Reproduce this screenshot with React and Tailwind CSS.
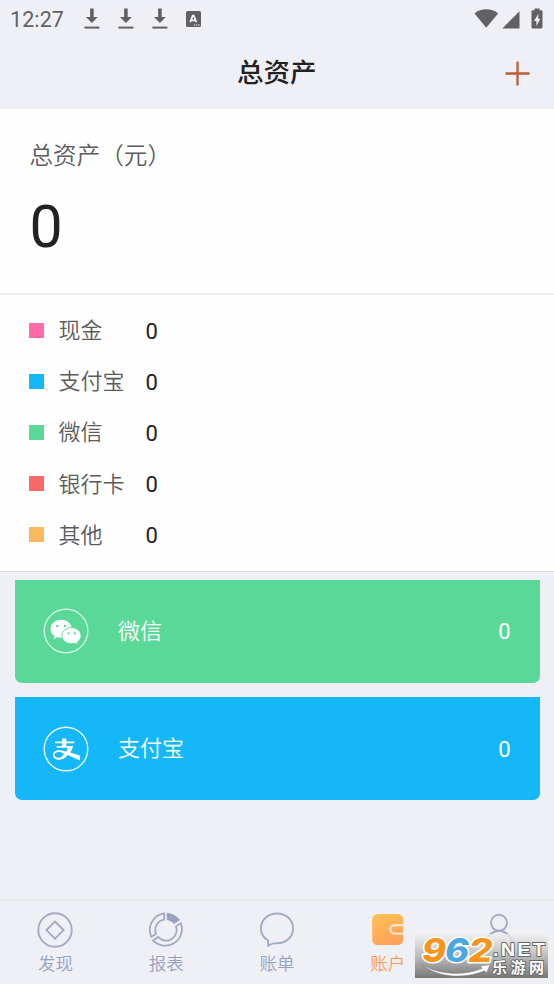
import React from 'react'

const summary = [
  { name: '现金', value: 0, color: 'bg-[#ff6ba8]' },
  { name: '支付宝', value: 0, color: 'bg-[#14b7f8]' },
  { name: '微信', value: 0, color: 'bg-[#5ad898]' },
  { name: '银行卡', value: 0, color: 'bg-[#fb686a]' },
  { name: '其他', value: 0, color: 'bg-[#fab95c]' },
]

const DownloadIcon = () => (
  <svg width="16" height="22" viewBox="0 0 16 22" fill="#616163">
    <path d="M6.1 0.5h3.6v8.5h4.1L7.9 15 2 9h4.1z" />
    <path d="M0.4 18.6h15v2H0.4z" />
  </svg>
)

const KeyboardIcon = () => (
  <svg width="15" height="16" viewBox="0 0 15 16">
    <rect width="15" height="16" rx="1.6" fill="#616163" />
    <path d="M4.2 11.3 6.7 4.6h1.1l2.5 6.7M5.2 9.3h4.1" fill="none" stroke="#f2f3f6" strokeWidth="1.8" />
    <path d="M7.8 13.4h1.4v1.2H7.8zM10 13.4h1.4v1.2H10zM12.2 13.4h1.4v1.2h-1.4z" fill="#f2f3f6" />
  </svg>
)

const StatusBar = () => (
  <div className="flex h-[37px] items-center px-[10px]">
    <span className="w-[74px] pt-[2px] text-[21.5px] tracking-[0.1px] text-[#616163]">12:27</span>
    <div className="flex items-center gap-[18px]">
      <DownloadIcon />
      <DownloadIcon />
      <DownloadIcon />
      <KeyboardIcon />
    </div>
    <svg className="ml-auto" width="70" height="22" viewBox="0 0 70 22" fill="#616163">
      <path d="M0.5 5.4C3.8 2.6 7.8 1.2 12.2 1.2S20.8 2.6 24.1 5.4L12.2 19.8z" />
      <path d="M45.5 3.2v17.2H28.4z" />
      <path d="M60.5 0.5h5v1.8h1.8c.7 0 1.2.5 1.2 1.2v15.8c0 .7-.5 1.2-1.2 1.2h-8.6c-.7 0-1.2-.5-1.2-1.2V3.500c0-.7.5-1.2 1.2-1.2h1.8z" />
      <path d="M64.4 5.8 60 13h2.4v5l4-7.3h-2.2z" fill="#f2f3f6" />
    </svg>
  </div>
)

const WechatIcon = () => (
  <svg width="46" height="46" viewBox="0 0 46 46">
    <circle cx="23" cy="23" r="21.8" fill="none" stroke="#fff" strokeOpacity="0.85" strokeWidth="1.2" />
    <path d="M18.2 11.7c-6 0-10.7 4.1-10.7 9.2 0 2.9 1.5 5.3 4 7l-1 3.4 3.8-2c1.2.3 2.5.5 3.9.5 6 0 10.7-4 10.7-8.9s-4.7-9.2-10.7-9.2z" fill="#fff" />
    <path d="M28.5 19.6c-5.4 0-9.6 3.6-9.6 8.1s4.2 8.1 9.6 8.1c1.2 0 2.3-.2 3.3-.5l3.3 1.9-.8-3.1c2.2-1.5 3.8-3.8 3.8-6.4 0-4.5-4.3-8.1-9.6-8.1z" fill="#fff" stroke="#5ad898" strokeWidth="1" />
    <g fill="#5ad898">
      <circle cx="14.4" cy="18" r="1.3" />
      <circle cx="22" cy="18" r="1.3" />
      <circle cx="25.6" cy="25.4" r="1.1" />
      <circle cx="31.9" cy="25.4" r="1.1" />
    </g>
  </svg>
)

const AlipayIcon = () => (
  <svg width="46" height="46" viewBox="0 0 46 46">
    <circle cx="23" cy="23" r="21.8" fill="none" stroke="#fff" strokeOpacity="0.9" strokeWidth="1.4" />
    <path d="M19.1 12.4h4.2v3.2h8.1v1.6h-8.1v2.8h6.8c-.5 2.5-1.5 4.6-2.9 6.5l9.6 3v5l-12-5.400c-2.400 3-5.300 4.600-8.500 4.600-3.700 0-6.300-2-6.300-4.800 0-2.700 2.600-4.600 5.900-4.600 2.500 0 4.700.6 7.300 1.400.8-1.200 1.200-2.400 1.500-3.900h-11v-1.800h5.400v-2.800h-7v-1.600h7z" fill="#fff" />
    <path d="M21 27.700c-1.800-1.200-3.600-1.700-5.200-1.700-2.400 0-4.200 1-4.200 2.800s1.700 2.900 4 2.900c2 0 3.800-1.400 5.400-4z" fill="#14b7f8" />
  </svg>
)

const AccountCard = ({ icon, name, value, color }) => (
  <div className={`flex h-[103px] items-center rounded-b-[7px] pl-[28.5px] pr-[29px] text-[22px] text-white ${color}`}>
    {icon}
    <span className="ml-[29px] pt-[1px] font-[350]">{name}</span>
    <span className="ml-auto pt-[2px]">{value}</span>
  </div>
)

const DiscoverIcon = () => (
  <svg width="36" height="36" viewBox="0 0 36 36" fill="none" stroke="#a2aac5" strokeWidth="1.9">
    <circle cx="18" cy="18" r="16.7" />
    <path d="M18 9.500l8.600 8.600-8.600 8.600-8.600-8.600z" />
  </svg>
)

const ReportIcon = () => (
  <svg width="36" height="36" viewBox="0 0 36 36" fill="none" stroke="#a2aac5" strokeWidth="1.8">
    <path d="M16.2 1.4v6.2A10.6 10.6 0 0 0 8 21.9l-4.7 2.9A16.7 16.7 0 0 1 16.2 1.4z" />
    <path d="M32.9 11.3A16.7 16.7 0 0 1 5 28.4l5-3.500a10.600 10.600 0 0 0 18-10.600z" />
    <path d="M19.2 1.2c5 .4 9.3 2.8 12.4 6.8L26 11.6c-1.8-2.1-4-3.4-6.8-3.900z" fill="#98a1c0" stroke="#98a1c0" strokeWidth="0.8" />
  </svg>
)

const BillIcon = () => (
  <svg width="36" height="36" viewBox="0 0 36 36" fill="none" stroke="#a2aac5" strokeWidth="1.9" strokeLinejoin="round">
    <path d="M18 1.5c9 0 16.100 6.400 16.100 14.900S27 31.300 18 31.300c-1.600 0-3 0-4.400.4-1.600.4-2.800 1.200-4.300 2.100l-.4-5.600C4.500 25.500 1.900 21.500 1.900 16.400 1.900 7.900 9 1.500 18 1.500z" />
  </svg>
)

const AccountIcon = () => (
  <svg width="36" height="36" viewBox="0 0 36 36">
    <defs>
      <linearGradient id="wallet" x1="0" y1="0" x2="0.4" y2="1">
        <stop offset="0" stopColor="#fec353" />
        <stop offset="1" stopColor="#fea25b" />
      </linearGradient>
    </defs>
    <rect x="2.200" y="2" width="31" height="31" rx="5.500" fill="url(#wallet)" />
    <path d="M33.2 13.200h-8.700a4.200 4.200 0 0 0 0 8.400h8.700" fill="none" stroke="#fbeede" strokeWidth="1.9" />
  </svg>
)

const ProfileIcon = () => (
  <svg width="36" height="36" viewBox="0 0 36 36" fill="none" stroke="#a2aac5" strokeWidth="1.9">
    <circle cx="18" cy="10.800" r="8" />
    <path d="M4.500 33c0-7.500 6-14 13.500-14s13.500 6.500 13.500 14" />
  </svg>
)

const tabs = [
  { name: '发现', Icon: DiscoverIcon },
  { name: '报表', Icon: ReportIcon },
  { name: '账单', Icon: BillIcon },
  { name: '账户', Icon: AccountIcon, active: true },
  { name: '我的', Icon: ProfileIcon },
]

const Watermark = () => (
  <svg className="absolute bottom-[6px] right-[6px] overflow-visible" width="133" height="44" viewBox="0 0 133 44">
    <defs>
      <linearGradient id="plate" x1="0" y1="0" x2="0" y2="1">
        <stop offset="0" stopColor="#eeeeee" stopOpacity="0.75" />
        <stop offset="0.5" stopColor="#b8b8b8" stopOpacity="0.92" />
        <stop offset="1" stopColor="#777777" />
      </linearGradient>
    </defs>
    <rect width="133" height="44" fill="url(#plate)" />
    <path d="M7 30.500c17 10.500 42 11.500 60 4l-1.500-2.500 9.500-1.500-3.500 8.500-1.800-2.300C49 45.500 22 43.500 7 30.500z" fill="#fff" stroke="#777" strokeWidth="0.5" />
    <g fontFamily="Inter, sans-serif" fontWeight="800" fontStyle="italic" fontSize="32" stroke="#fff" strokeWidth="3" paintOrder="stroke" strokeLinejoin="round">
      <text x="7" y="27.5" textLength="24" lengthAdjust="spacingAndGlyphs" fill="#f7941e">9</text>
      <text x="30" y="27.5" textLength="24" lengthAdjust="spacingAndGlyphs" fill="#4ba7df">6</text>
      <text x="53.5" y="27.5" textLength="24" lengthAdjust="spacingAndGlyphs" fill="#f7941e">2</text>
    </g>
    <g fill="#fff" stroke="#666" strokeWidth="1.8" paintOrder="stroke" strokeLinejoin="round">
      <text x="78" y="22" textLength="54" lengthAdjust="spacingAndGlyphs" letterSpacing="2" fontFamily="'Liberation Sans', sans-serif" fontWeight="700" fontSize="18.5">.NET</text>
      <text x="77" y="39" textLength="52" fontFamily="'Noto Sans CJK SC', sans-serif" fontWeight="700" fontSize="15">乐游网</text>
    </g>
  </svg>
)

const App = () => {
  return (
    <div className="relative flex h-[984px] w-[554px] flex-col overflow-hidden bg-[#eff0f5] font-[Roboto,'Noto_Sans_CJK_SC',sans-serif] leading-none">
      <StatusBar />
      <header className="grid h-[72px] grid-cols-[1fr_auto_1fr] items-center pr-[24px]">
        <span />
        <h1 className="pl-[23.5px] pt-[1px] text-[26.5px] font-medium text-[#222]">总资产</h1>
        <svg className="justify-self-end" width="25" height="25" viewBox="0 0 25 25" stroke="#b95d3a" strokeWidth="2.3">
          <path d="M12.500 0.500v24M0.500 12.500h24" />
        </svg>
      </header>

      <section className="h-[186px] border-b-2 border-[#eceef1] bg-[#fefefe] pl-[29.5px] pt-[35.5px]">
        <p className="text-[23.6px] font-[350] text-[#5c5c5c]">总资产（元）</p>
        <p className="mt-[29px] text-[59px] text-[#222]">0</p>
      </section>

      <section className="flex h-[277px] flex-col border-b border-[#d9dbe0] bg-[#fefefe] pl-[29px] pt-[10px]">
        {summary.map((item) => (
          <div key={item.name} className="flex h-[51.2px] items-center text-[22px]">
            <i className={`mb-[1px] size-[15px] ${item.color}`} />
            <span className="ml-[14.5px] w-[87px] pt-[1px] font-[350] text-[#5c5c5c]">{item.name}</span>
            <span className="pt-[2px] text-[#222]">{item.value}</span>
          </div>
        ))}
      </section>

      <main className="flex flex-1 flex-col gap-[14.5px] px-[14.5px] pt-[7.5px]">
        <AccountCard icon={<WechatIcon />} name="微信" value={0} color="bg-[#5ad898]" />
        <AccountCard icon={<AlipayIcon />} name="支付宝" value={0} color="bg-[#14b7f8]" />
      </main>

      <nav className="grid h-[85px] grid-cols-5 border-t-2 border-[#e4e6ea] pt-[10.5px]">
        {tabs.map(({ name, Icon, active }) => (
          <div key={name} className="flex flex-col items-center gap-[8px]">
            <Icon />
            <span className={`text-[17.5px] font-[350] ${active ? 'text-[#fe9a50]' : 'text-[#98a1c0]'}`}>{name}</span>
          </div>
        ))}
      </nav>

      <Watermark />
    </div>
  )
}

export default App
